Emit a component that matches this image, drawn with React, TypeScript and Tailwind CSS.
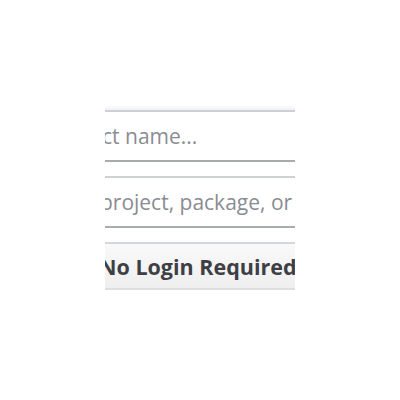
const Field: React.FC<{ text: string; shift: string }> = ({ text, shift }) => {
  return (
    <div className="flex h-[52px] items-center border-y-2 border-t-[#cdd0d6] border-b-[#a7aab1] bg-white pt-[2px]">
      <span className={`whitespace-nowrap text-[21px] text-[#8a8c92] ${shift}`}>{text}</span>
    </div>
  );
};

export default function App() {
  return (
    <div className="h-[400px] w-[400px] bg-white pt-[105px] font-['Open_Sans',sans-serif]">
      <div className="ml-[105px] w-[190px] overflow-hidden">
        <div className="h-[5px] bg-gradient-to-b from-white to-[#eef0f4]" />
        <Field text="Enter project name..." shift="-ml-[112px]" />
        <div className="h-[14px]" />
        <Field text="Search project, package, or keyword" shift="-ml-[77px]" />
        <div className="h-[14px]" />
        <div className="flex h-[48px] items-center border-y-2 border-t-[#d3d6dc] border-b-[#dcdee3] bg-gradient-to-b from-[#f9f9f9] to-[#efefef] pt-[2px]">
          <span className="-ml-[6px] whitespace-nowrap text-[21.5px] font-bold text-[#3d3f45]">
            No Login Required
          </span>
        </div>
      </div>
    </div>
  );
}
